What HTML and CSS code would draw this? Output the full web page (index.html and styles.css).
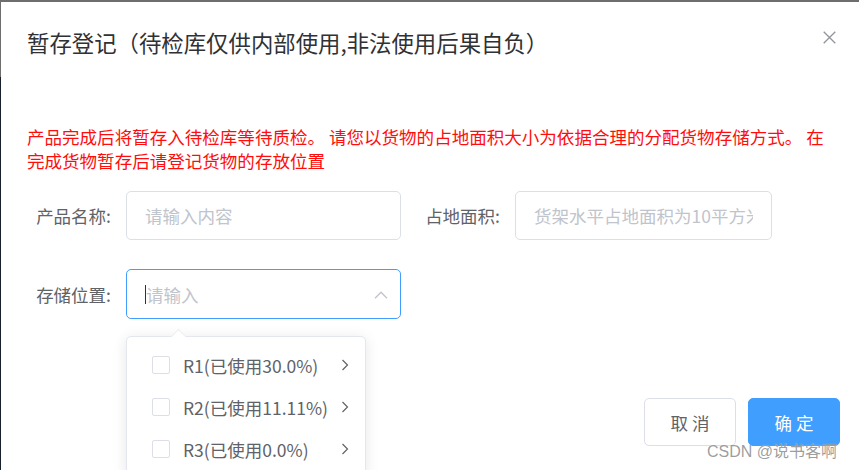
FILE: index.html
```html
<!DOCTYPE html>
<html lang="zh-CN">
<head>
<meta charset="utf-8">
<title>暂存登记</title>
<link rel="stylesheet" href="styles.css">
</head>
<body>
<div class="dialog">
  <div class="dialog-header">
    <span class="dialog-title">暂存登记（待检库仅供内部使用,非法使用后果自负）</span>
    <button class="close-btn" aria-label="关闭">
      <svg width="13" height="13" viewBox="0 0 13 13"><path d="M0.7 0.7 L12.3 12.3 M12.3 0.7 L0.7 12.3" stroke="#909399" stroke-width="1.3" fill="none"/></svg>
    </button>
  </div>
  <div class="dialog-body">
    <p class="notice">产品完成后将暂存入待检库等待质检。 请您以货物的占地面积大小为依据合理的分配货物存储方式。 在<br>完成货物暂存后请登记货物的存放位置</p>
    <form class="form">
      <div class="form-row">
        <div class="form-item">
          <label class="form-label">产品名称:</label>
          <input class="input input-wide" type="text" placeholder="请输入内容">
        </div>
        <div class="form-item form-item-second">
          <label class="form-label">占地面积:</label>
          <input class="input input-narrow" type="text" placeholder="货架水平占地面积为10平方米">
        </div>
      </div>
      <div class="form-row form-row-select">
        <div class="form-item">
          <label class="form-label">存储位置:</label>
          <div class="select">
            <div class="select-input"><span class="caret"></span><span class="placeholder">请输入</span></div>
            <svg class="select-arrow" width="14" height="8" viewBox="0 0 14 8"><path d="M1 7.3 L7 1.2 L13 7.3" stroke="#c0c4cc" stroke-width="1.3" fill="none"/></svg>
            <div class="cascader">
              <span class="cascader-arrow"></span>
              <ul class="cascader-menu">
                <li class="node"><span class="checkbox"></span><span class="node-label">R1(已使用30.0%)</span><svg class="node-chevron" width="8" height="12" viewBox="0 0 8 12"><path d="M1.5 1 L6.5 6 L1.5 11" stroke="#606266" stroke-width="1.2" fill="none"/></svg></li>
                <li class="node"><span class="checkbox"></span><span class="node-label">R2(已使用11.11%)</span><svg class="node-chevron" width="8" height="12" viewBox="0 0 8 12"><path d="M1.5 1 L6.5 6 L1.5 11" stroke="#606266" stroke-width="1.2" fill="none"/></svg></li>
                <li class="node"><span class="checkbox"></span><span class="node-label">R3(已使用0.0%)</span><svg class="node-chevron" width="8" height="12" viewBox="0 0 8 12"><path d="M1.5 1 L6.5 6 L1.5 11" stroke="#606266" stroke-width="1.2" fill="none"/></svg></li>
              </ul>
            </div>
          </div>
        </div>
      </div>
    </form>
  </div>
  <div class="dialog-footer">
    <button class="btn btn-default" type="button">取 消</button>
    <button class="btn btn-primary" type="button">确 定</button>
  </div>
  <div class="watermark">CSDN @说书客啊</div>
</div>
</body>
</html>
```
FILE: styles.css
```css
* { box-sizing: border-box; }
html, body { margin: 0; padding: 0; }
body {
  width: 859px;
  height: 470px;
  overflow: hidden;
  background: linear-gradient(#6e6e6e 0, #6e6e6e 77px, #18202e 77px);
  font-family: "Noto Sans CJK SC", "Noto Sans", sans-serif;
}
.dialog {
  position: relative;
  margin: 2px 0 0 1px;
  width: 858px;
  height: 468px;
  overflow: hidden;
  background: #fff;
}
.dialog-header {
  padding: 25px 19px 12px 26px;
}
.dialog-title {
  display: block;
  font-size: 22.4px;
  line-height: 30px;
  color: #303133;
}
.close-btn {
  position: absolute;
  top: 29px;
  right: 23px;
  width: 13px;
  height: 13px;
  padding: 0;
  border: 0;
  background: none;
  display: flex;
}
.dialog-body {
  padding: 56px 19px 0 26px;
}
.notice {
  margin: 0;
  font-size: 17.55px;
  line-height: 24px;
  color: #ff0d0d;
  white-space: nowrap;
}
.form {
  margin-top: 18px;
}
.form-row {
  display: flex;
  height: 49px;
  margin-bottom: 29px;
}
.form-row-select {
  height: 50px;
  margin-bottom: 0;
}
.form-item {
  display: flex;
  align-items: center;
}
.form-item-second {
  margin-left: 14px;
}
.form-label {
  width: 99px;
  padding-right: 15px;
  text-align: right;
  font-size: 17.5px;
  color: #606266;
}
.form-item-second .form-label { width: 100px; }
.input {
  height: 49px;
  border: 1px solid #dcdfe6;
  border-radius: 5px;
  padding: 0 18px;
  font-family: inherit;
  font-size: 17.5px;
  color: #606266;
  outline: none;
  background: #fff;
}
.input::placeholder { color: #c0c4cc; }
.input-wide { width: 275px; }
.input-narrow { width: 257px; }
.select {
  position: relative;
  width: 275px;
  height: 50px;
}
.select-input {
  height: 50px;
  border: 1px solid #409eff;
  border-radius: 5px;
  padding: 0 18px;
  display: flex;
  align-items: center;
  font-size: 17.5px;
  color: #c0c4cc;
}
.caret {
  width: 1px;
  height: 19px;
  background: #303133;
}
.select-arrow {
  position: absolute;
  right: 13px;
  top: 22px;
}
.cascader {
  position: absolute;
  left: 0;
  top: 67px;
  width: 240px;
  height: 140px;
  background: #fff;
  border: 1px solid #e4e7ed;
  border-radius: 5px;
  box-shadow: 0 2px 14px rgba(0, 0, 0, 0.1);
}
.cascader-arrow {
  position: absolute;
  left: 46px;
  top: -6px;
  width: 11px;
  height: 11px;
  background: #fff;
  border-left: 1px solid #ebeef5;
  border-top: 1px solid #ebeef5;
  transform: rotate(45deg);
}
.cascader-menu {
  list-style: none;
  margin: 0;
  padding: 7px 0 0;
}
.node {
  position: relative;
  display: flex;
  align-items: center;
  height: 42px;
  padding-left: 25px;
  font-size: 17.5px;
  color: #606266;
}
.checkbox {
  width: 18px;
  height: 18px;
  border: 1px solid #dcdfe6;
  border-radius: 2px;
  margin-right: 13px;
  flex: none;
}
.node-chevron {
  position: absolute;
  right: 16px;
  top: 15px;
}
.dialog-footer {
  display: flex;
  justify-content: flex-end;
  gap: 12px;
  margin-top: 79px;
  padding-right: 19px;
}
.btn {
  width: 92px;
  height: 48px;
  border-radius: 5px;
  font-family: inherit;
  font-size: 17.5px;
  padding: 0;
}
.btn-default {
  background: #fff;
  border: 1px solid #dcdfe6;
  color: #606266;
}
.btn-primary {
  background: #409eff;
  border: 1px solid #409eff;
  color: #fff;
}
.watermark {
  position: absolute;
  left: 706px;
  top: 441px;
  font-family: "Liberation Sans", "Noto Sans CJK SC", sans-serif;
  font-size: 16px;
  line-height: 18px;
  color: rgba(140, 140, 140, 0.85);
  text-shadow: 0 0 1px rgba(255, 255, 255, 0.6);
}
```
